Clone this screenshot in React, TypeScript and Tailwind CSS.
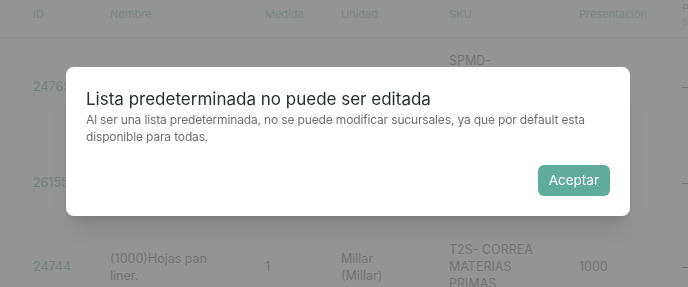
import React from 'react'

const font = { fontFamily: 'Inter, "Noto Sans", sans-serif' }

const cols = 'grid grid-cols-[77px_155px_76px_108px_130px_103px_1fr] pl-[33px]'

const filas = [
  {
    id: '24765',
    nombre: ['Bolsa papel', 'kraft mediana'],
    medida: '1',
    unidad: ['Pieza', '(Pieza)'],
    sku: ['SPMD-', 'BOLSA', 'PAPEL', 'KRAFT'],
    presentacion: '1',
    pad: 'py-[14px]',
  },
  {
    id: '26155',
    nombre: ['Caja carton', 'para pastel'],
    medida: '1',
    unidad: ['Pieza', '(Pieza)'],
    sku: ['CJP-', 'CAJA', 'CARTON', 'PASTEL'],
    presentacion: '1',
    pad: 'pt-[14px] pb-[11px]',
  },
  {
    id: '24744',
    nombre: ['(1000)Hojas pan', 'liner.'],
    medida: '1',
    unidad: ['Millar', '(Millar)'],
    sku: ['T2S- CORREA', 'MATERIAS', 'PRIMAS'],
    presentacion: '1000',
    pad: 'py-[14px]',
  },
]

function Lineas({ items }: { items: string[] }) {
  return (
    <div>
      {items.map((t) => (
        <div key={t}>{t}</div>
      ))}
    </div>
  )
}

export default function App() {
  return (
    <div className="relative h-[287px] w-[688px] overflow-hidden bg-white" style={font}>
      {/* tabla de fondo */}
      <div className="text-[12.5px] leading-[17px] text-[#c9c9c9]">
        <div className={`${cols} h-[38px] items-center border-b border-[#f2f2f2] pb-2 text-[11px] text-[#d4ece3]`}>
          <div>ID</div>
          <div>Nombre</div>
          <div>Medida</div>
          <div>Unidad</div>
          <div>SKU</div>
          <div>Presentación</div>
          <div className="leading-[14px]">
            <div>Precio</div>
            <div>lista</div>
          </div>
        </div>
        {filas.map((f) => (
          <div key={f.id} className={`${cols} items-center ${f.pad}`}>
            <div className="text-[#c6e3d9]">{f.id}</div>
            <Lineas items={f.nombre} />
            <div>{f.medida}</div>
            <Lineas items={f.unidad} />
            <Lineas items={f.sku} />
            <div>{f.presentacion}</div>
            <div>—</div>
          </div>
        ))}
      </div>

      {/* modal */}
      <div className="fixed inset-0 bg-black/[0.42] pl-[66px] pt-[67px]">
        <div className="w-[564px] rounded-lg bg-white p-5 shadow-xl">
          <h2 className="text-[17px] leading-6 text-[#27302d]">
            Lista predeterminada no puede ser editada
          </h2>
          <p className="text-[12px] leading-[17px] tracking-[-0.15px] text-[#6b6f6e]">
            Al ser una lista predeterminada, no se puede modificar sucursales, ya que por default esta disponible para todas.
          </p>
          <div className="mt-5 flex justify-end">
            <button className="h-[31px] rounded-md bg-[#5fac9a] px-[11px] text-[13.5px] text-white">
              Aceptar
            </button>
          </div>
        </div>
      </div>
    </div>
  )
}
